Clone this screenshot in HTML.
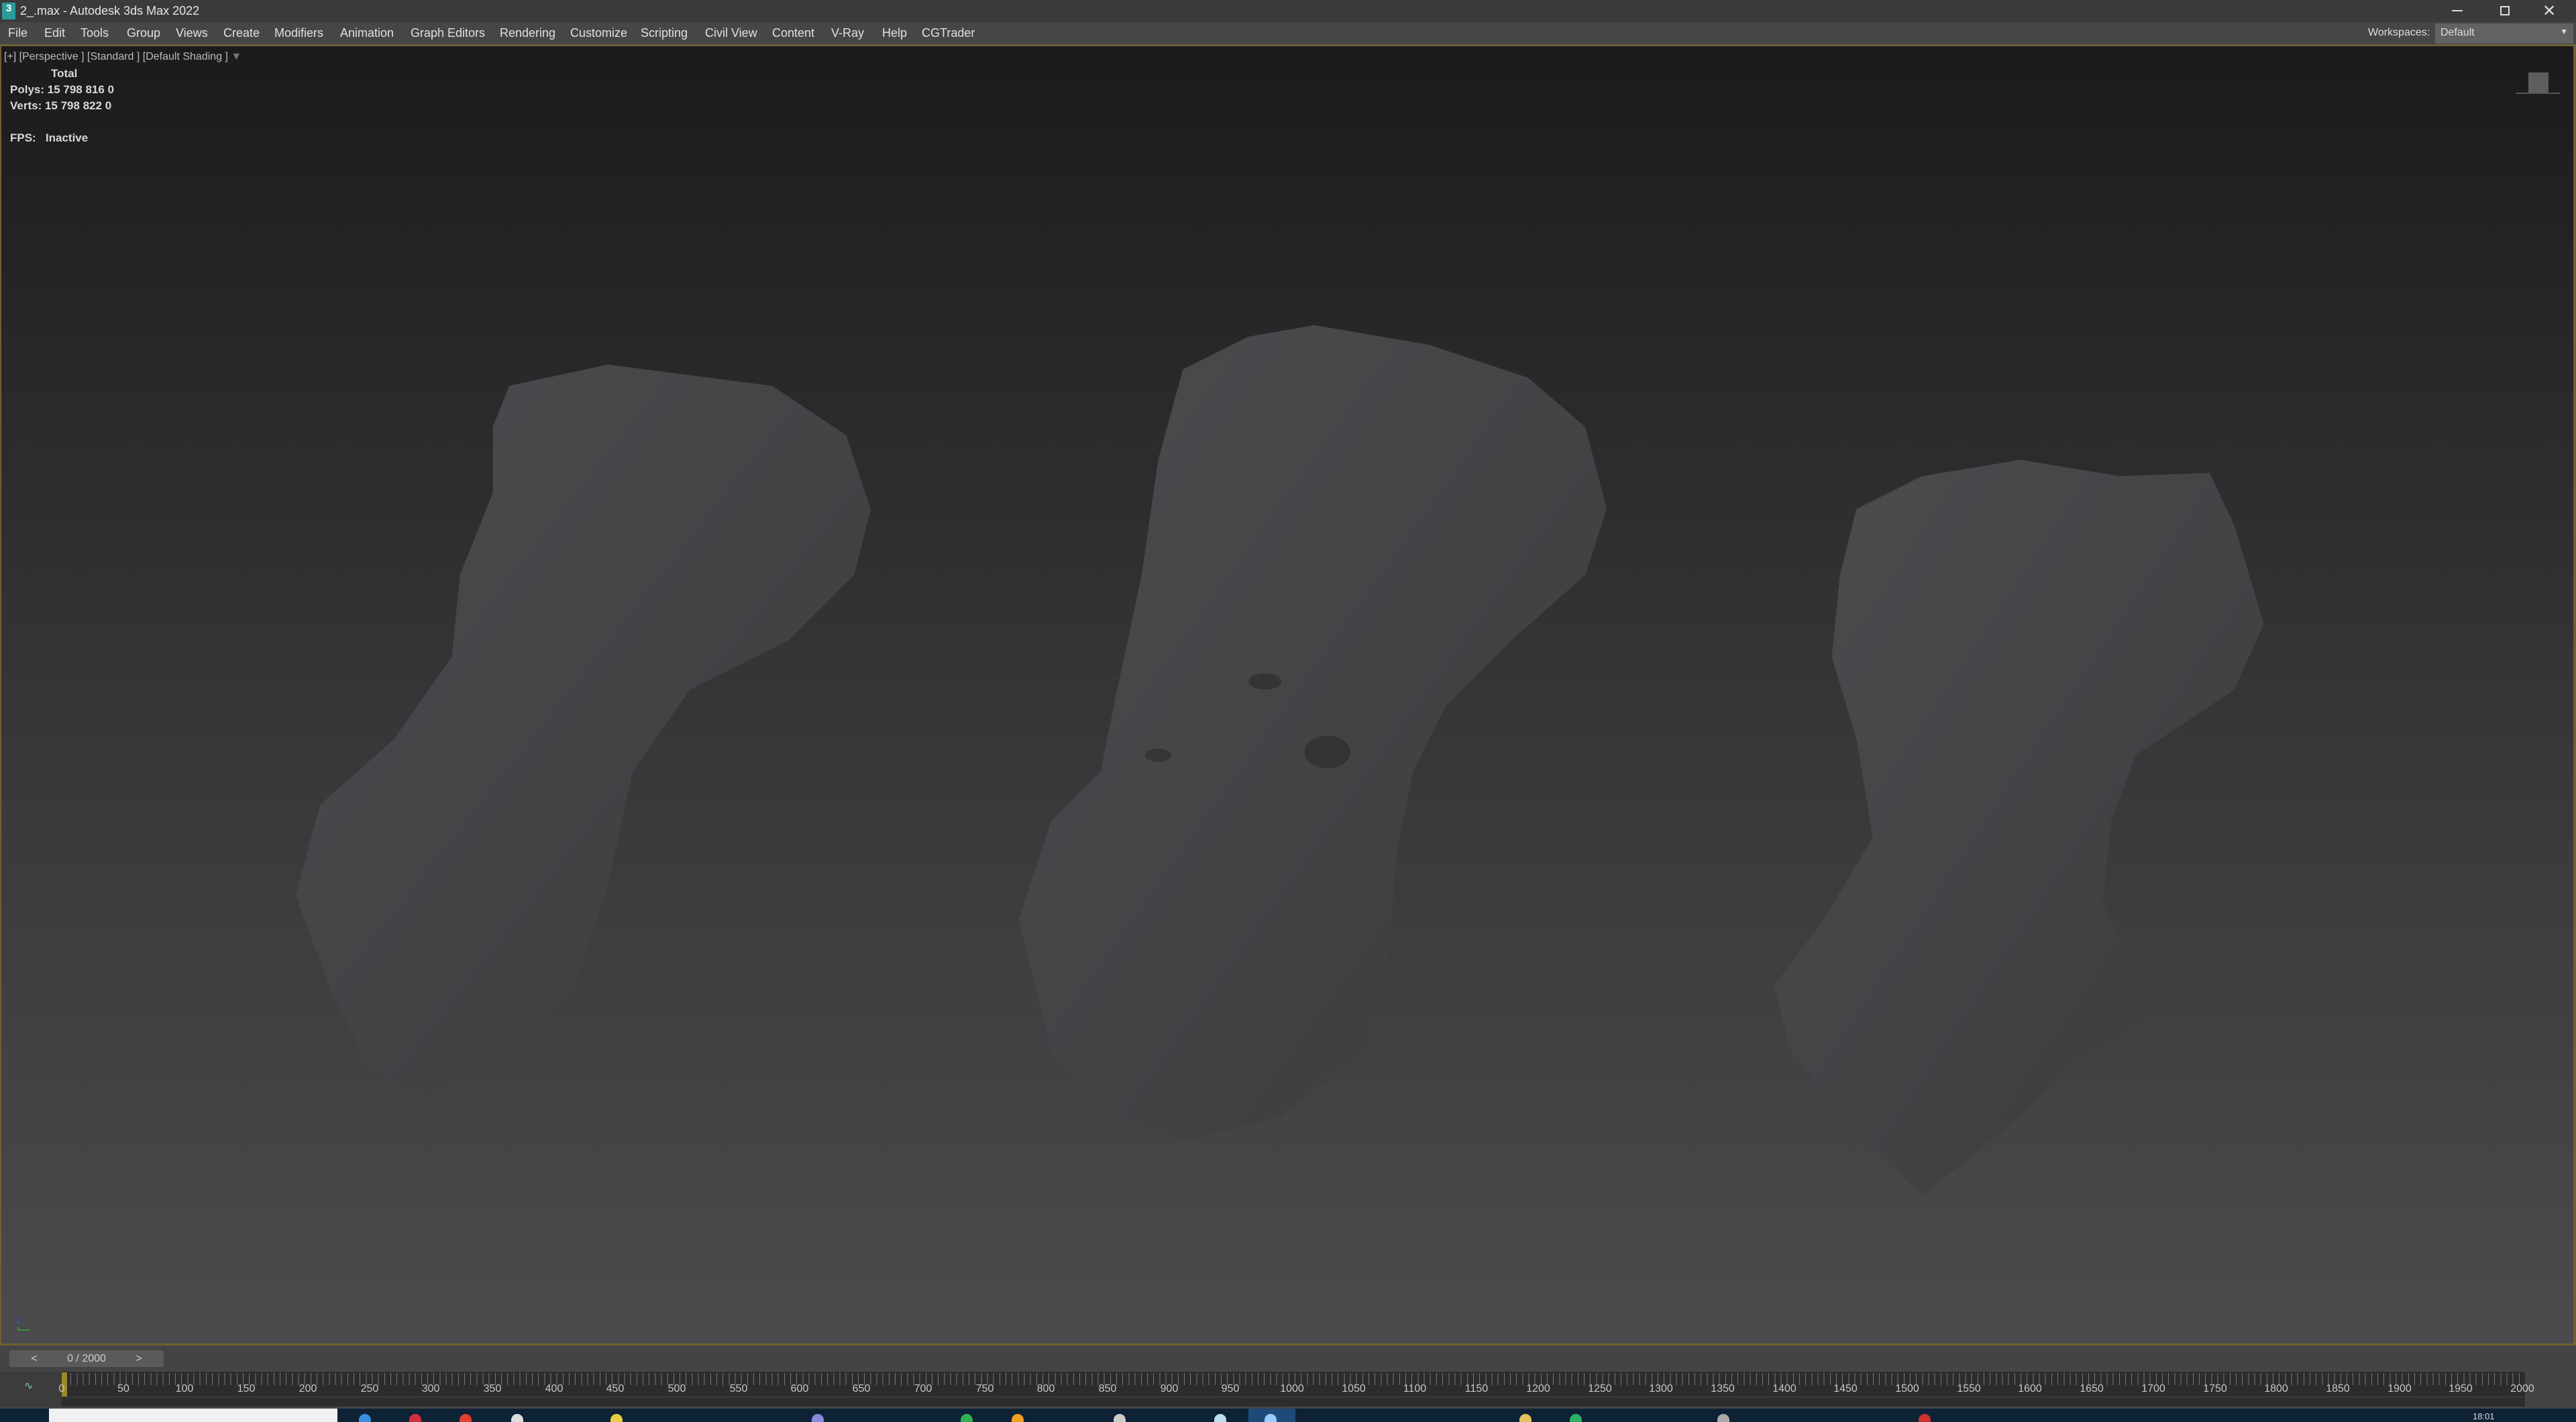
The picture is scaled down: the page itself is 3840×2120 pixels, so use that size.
<!DOCTYPE html>
<html><head><meta charset="utf-8"><style>
*{margin:0;padding:0;box-sizing:border-box}
body{width:3840px;height:2120px;overflow:hidden;background:#3a3a3a;font-family:"Liberation Sans",sans-serif;position:relative}
.abs{position:absolute}
#title{left:0;top:0;width:3840px;height:33px;background:#3b3b3b}
#menu{left:0;top:33px;width:3840px;height:33px;background:#464646}
.mi{position:absolute;top:39px;font-size:18px;color:#e0e0e0;white-space:nowrap}
#vp{left:0;top:66px;width:3840px;height:1940px;background:linear-gradient(#1b1b1d 0%,#262628 20%,#38383a 55%,#4b4b4d 100%);border-top:3px solid #6e5f34;border-bottom:3px solid #6e5f34;border-left:2px solid #6e5f34;border-right:4px solid #6e5f34}
.t{color:#d8d8d8;font-size:17px;position:absolute;white-space:nowrap}
#tl{left:0;top:2006px;width:3840px;height:94px;background:#444446}
#track{left:92px;top:2045px;width:3672px;height:52px;background:#2c2c2c}
#ticks{left:96px;top:2047px;width:3666px;height:18px;background:repeating-linear-gradient(90deg,#777 0 1px,transparent 1px 9.17px)}
.n{position:absolute;top:2062px;width:40px;text-align:center;font-size:16px;color:#c8c8c8}
#task{left:0;top:2100px;width:3840px;height:20px;background:#0e2236}
.ic{position:absolute;top:2108px;width:18px;height:12px;border-radius:9px 9px 0 0}
</style></head><body>
<div id="title" class="abs"></div>
<div class="abs" style="left:3px;top:4px;width:20px;height:25px;background:#2a9c9c;color:#fff;font-size:15px;font-weight:bold;text-align:center">3</div>
<div class="abs" style="left:30px;top:6px;font-size:18px;color:#e6e6e6">2_.max - Autodesk 3ds Max 2022</div>
<div class="abs" style="left:3655px;top:15px;width:16px;height:2px;background:#ddd"></div>
<div class="abs" style="left:3727px;top:9px;width:14px;height:14px;border:2px solid #ddd"></div>
<div class="abs" style="left:3790px;top:2px;font-size:24px;color:#ddd">✕</div>
<div id="menu" class="abs"></div>
<div class="mi" style="left:12px">File</div><div class="mi" style="left:66px">Edit</div><div class="mi" style="left:120px">Tools</div><div class="mi" style="left:189px">Group</div><div class="mi" style="left:262px">Views</div><div class="mi" style="left:333px">Create</div><div class="mi" style="left:409px">Modifiers</div><div class="mi" style="left:507px">Animation</div><div class="mi" style="left:612px">Graph Editors</div><div class="mi" style="left:745px">Rendering</div><div class="mi" style="left:850px">Customize</div><div class="mi" style="left:955px">Scripting</div><div class="mi" style="left:1051px">Civil View</div><div class="mi" style="left:1151px">Content</div><div class="mi" style="left:1239px">V-Ray</div><div class="mi" style="left:1315px">Help</div><div class="mi" style="left:1374px">CGTrader</div>
<div class="abs" style="left:3530px;top:40px;font-size:16px;color:#ddd">Workspaces:</div>
<div class="abs" style="left:3630px;top:35px;width:206px;height:30px;background:#626262;color:#ddd;font-size:16px;padding:5px 8px">Default<span style="float:right;font-size:12px">▼</span></div>
<div id="vp" class="abs"></div>
<div class="t" style="left:6px;top:76px;font-size:16px;color:#bbb">[+] [Perspective ] [Standard ] [Default Shading ] <span style="color:#777">▼</span></div>
<div class="t" style="left:76px;top:100px;font-weight:bold">Total</div>
<div class="t" style="left:15px;top:124px;font-weight:bold">Polys: 15 798 816 0</div>
<div class="t" style="left:15px;top:148px;font-weight:bold">Verts: 15 798 822 0</div>
<div class="t" style="left:15px;top:196px;font-weight:bold">FPS: &nbsp; Inactive</div>
<div class="abs" style="left:3769px;top:108px;width:30px;height:30px;background:#5e5e5e"></div>
<div class="abs" style="left:3750px;top:138px;width:66px;height:2px;background:#555"></div>
<svg class="abs" style="left:0;top:0" width="3840" height="2120" viewBox="0 0 1568 866" preserveAspectRatio="none">
<defs>
<linearGradient id="g" x1="0" y1="0" x2="1" y2="1"><stop offset="0" stop-color="#4c4c4f"/><stop offset=".5" stop-color="#444447"/><stop offset="1" stop-color="#3a3a3c"/></linearGradient>
</defs>
<g fill="url(#g)">
<path d="M310,235 L370,222 L470,235 L515,265 L530,310 L520,350 L480,390 L420,420 L385,470 L370,540 L350,600 L300,640 L260,667 L225,650 L200,600 L180,545 L195,490 L240,450 L275,400 L280,350 L300,300 L300,260Z"/>
<path d="M720,225 L760,205 L800,198 L870,210 L930,230 L965,260 L978,310 L965,350 L920,390 L880,430 L860,470 L850,520 L845,590 L830,640 L780,680 L720,695 L680,680 L640,640 L620,560 L640,500 L670,470 L680,420 L695,350 L705,280Z"/>
<path d="M1130,310 L1170,290 L1230,280 L1290,290 L1345,288 L1360,320 L1378,380 L1360,420 L1300,460 L1285,500 L1280,550 L1300,590 L1305,620 L1260,650 L1230,680 L1170,728 L1140,700 L1090,640 L1080,600 L1110,560 L1140,510 L1130,450 L1115,400 L1120,350Z"/>
</g>
<g fill="#2e2e30" opacity=".7">
<ellipse cx="808" cy="458" rx="14" ry="10"/><ellipse cx="770" cy="415" rx="10" ry="5"/><ellipse cx="705" cy="460" rx="8" ry="4"/>
</g>
<text x="10" y="806" font-size="6" fill="#3050c0" font-family="Liberation Sans">z</text>
<path d="M11,808 V810 M11,810 H18" stroke="#3a3" stroke-width=".6"/>
</svg>
<div id="tl" class="abs"></div>
<div class="abs" style="left:14px;top:2013px;width:230px;height:25px;background:#5a5a5a;border-radius:4px;color:#ccc;font-size:16px;text-align:center;line-height:25px">&lt;&nbsp;&nbsp;&nbsp;&nbsp;&nbsp;&nbsp;&nbsp;&nbsp;&nbsp; 0 / 2000 &nbsp;&nbsp;&nbsp;&nbsp;&nbsp;&nbsp;&nbsp;&nbsp;&nbsp;&gt;</div>
<div class="abs" style="left:0;top:2045px;width:92px;height:52px;background:#3c3c3c"></div>
<div class="abs" style="left:36px;top:2056px;color:#7cc;font-size:16px">∿</div>
<div id="track" class="abs"></div>
<div id="ticks" class="abs"></div>
<div class="abs" style="left:92px;top:2046px;width:8px;height:36px;background:#9a8a2a"></div>
<div class="abs" style="left:92px;top:2082px;width:3672px;height:2px;background:#3a3a3a"></div>
<div class="n" style="left:72px">0</div><div class="n" style="left:164px">50</div><div class="n" style="left:255px">100</div><div class="n" style="left:347px">150</div><div class="n" style="left:439px">200</div><div class="n" style="left:531px">250</div><div class="n" style="left:622px">300</div><div class="n" style="left:714px">350</div><div class="n" style="left:806px">400</div><div class="n" style="left:897px">450</div><div class="n" style="left:989px">500</div><div class="n" style="left:1081px">550</div><div class="n" style="left:1172px">600</div><div class="n" style="left:1264px">650</div><div class="n" style="left:1356px">700</div><div class="n" style="left:1448px">750</div><div class="n" style="left:1539px">800</div><div class="n" style="left:1631px">850</div><div class="n" style="left:1723px">900</div><div class="n" style="left:1814px">950</div><div class="n" style="left:1906px">1000</div><div class="n" style="left:1998px">1050</div><div class="n" style="left:2089px">1100</div><div class="n" style="left:2181px">1150</div><div class="n" style="left:2273px">1200</div><div class="n" style="left:2365px">1250</div><div class="n" style="left:2456px">1300</div><div class="n" style="left:2548px">1350</div><div class="n" style="left:2640px">1400</div><div class="n" style="left:2731px">1450</div><div class="n" style="left:2823px">1500</div><div class="n" style="left:2915px">1550</div><div class="n" style="left:3006px">1600</div><div class="n" style="left:3098px">1650</div><div class="n" style="left:3190px">1700</div><div class="n" style="left:3282px">1750</div><div class="n" style="left:3373px">1800</div><div class="n" style="left:3465px">1850</div><div class="n" style="left:3557px">1900</div><div class="n" style="left:3648px">1950</div><div class="n" style="left:3740px">2000</div>
<div id="task" class="abs"></div>
<div class="abs" style="left:73px;top:2100px;width:430px;height:20px;background:#f0f0f2"></div>
<div class="abs" style="left:1861px;top:2100px;width:70px;height:20px;background:#1d4a78"></div>
<div class="ic" style="left:535px;background:#3a8ee0"></div><div class="ic" style="left:610px;background:#d03040"></div><div class="ic" style="left:685px;background:#e04030"></div><div class="ic" style="left:762px;background:#ddd"></div><div class="ic" style="left:910px;background:#e8d040"></div><div class="ic" style="left:1210px;background:#8888dd"></div><div class="ic" style="left:1432px;background:#30b050"></div><div class="ic" style="left:1508px;background:#f0a020"></div><div class="ic" style="left:1660px;background:#ccc"></div><div class="ic" style="left:1810px;background:#bde"></div><div class="ic" style="left:1885px;background:#9cf"></div><div class="ic" style="left:2265px;background:#e0c060"></div><div class="ic" style="left:2340px;background:#30b060"></div><div class="ic" style="left:2560px;background:#aaa"></div><div class="ic" style="left:2860px;background:#d03030"></div>
<div class="abs" style="left:3686px;top:2104px;font-size:13px;color:#ddd">18:01</div>
</body></html>
